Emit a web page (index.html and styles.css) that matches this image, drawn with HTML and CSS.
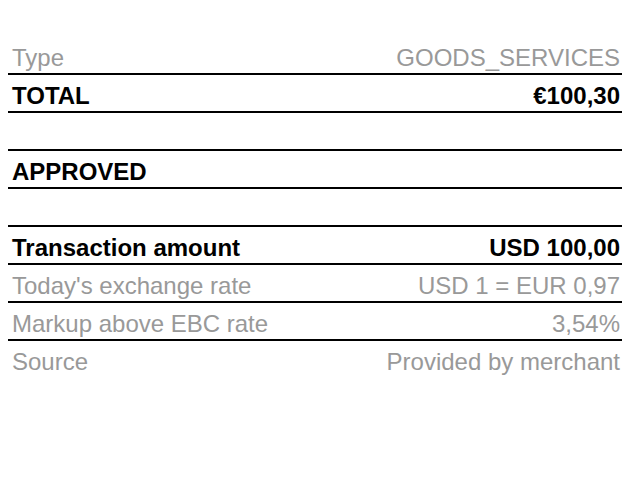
FILE: index.html
```html
<!DOCTYPE html>
<html lang="en">
<head>
  <meta charset="UTF-8" />
  <meta name="viewport" content="width=device-width, initial-scale=1.0"/>
  <title>Transaction</title>
  <link rel="stylesheet" href="styles.css">
</head>
<body>
  <div class="details">
    <div class="row muted"><span>Type</span><span>GOODS_SERVICES</span></div>
    <div class="row strong"><span>TOTAL</span><span>€100,30</span></div>
    <div class="row"></div>
    <div class="row strong"><span>APPROVED</span></div>
    <div class="row"></div>
    <div class="row strong"><span>Transaction amount</span><span>USD 100,00</span></div>
    <div class="row muted"><span>Today's exchange rate</span><span>USD 1 = EUR 0,97</span></div>
    <div class="row muted"><span>Markup above EBC rate</span><span>3,54%</span></div>
    <div class="row muted last"><span>Source</span><span>Provided by merchant</span></div>
  </div>
</body>
</html>
```

FILE: styles.css
```css
body {
  font-family: "Liberation Sans", Arial, sans-serif;
  margin: 0;
  background: #fff;
}
.details {
  margin: 37px 8px 0;
}
.row {
  display: flex;
  justify-content: space-between;
  height: 31px;
  padding: 5px 2px 0 4px;
  font-size: 24px;
  line-height: 31px;
  border-bottom: 2px solid #000;
  color: #000;
  white-space: nowrap;
}
.row.last {
  border-bottom: none;
}
.muted {
  color: #999;
}
.strong {
  font-weight: bold;
}
```
